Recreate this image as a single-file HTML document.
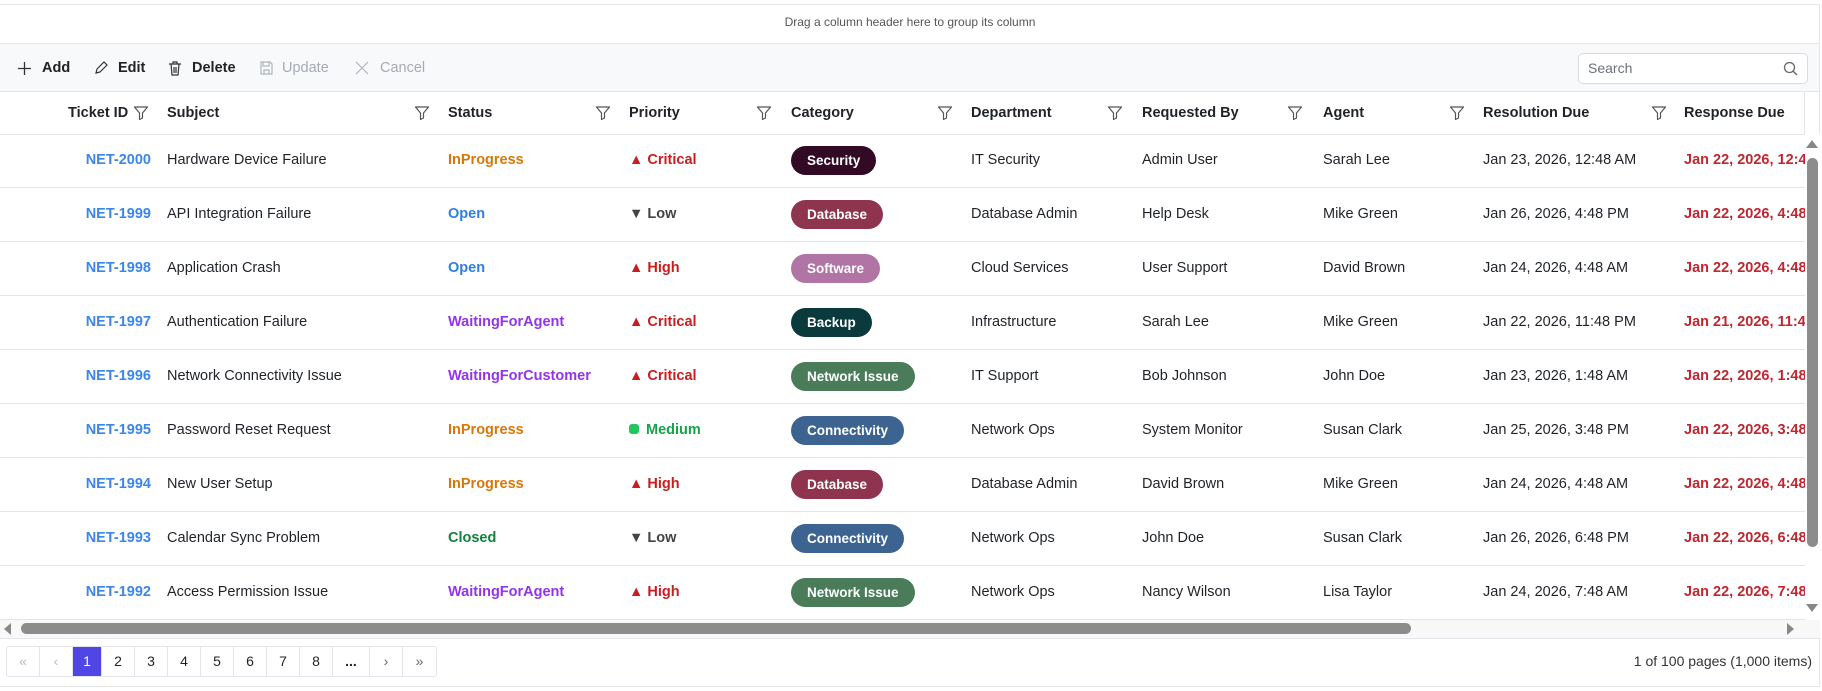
<!DOCTYPE html>
<html><head><meta charset="utf-8"><style>
*{box-sizing:border-box;margin:0;padding:0}
body{width:1822px;height:691px;background:#fff;font-family:"Liberation Sans",sans-serif;color:#1f2329;position:relative;overflow:hidden;font-size:14px}
.abs{position:absolute}
.hl{position:absolute;left:0;width:1820px;height:1px;background:#e3e5ea}
.tb{position:absolute;top:58px;height:20px;line-height:20px;font-size:14.5px;font-weight:bold;color:#222}
.tb.dis{color:#a7abb2;font-weight:normal}
.hd{position:absolute;top:104px;font-weight:bold;font-size:14.5px;line-height:18px}
.flt{position:absolute;top:105px}
.row{position:absolute;left:0;width:1805px;height:54px;border-bottom:1px solid #e3e5ea}
.c{position:absolute;top:0;line-height:53px;white-space:nowrap;font-size:14.5px}
.id{color:#3b86e8;font-weight:bold;text-align:right;width:151px;left:0}
.b{font-weight:bold}
.badge{position:absolute;left:791px;top:12px;height:29px;line-height:29px;border-radius:15px;color:#fff;font-weight:bold;font-size:13.5px;padding:0 16px}
.pg{position:absolute;top:646px;height:31px;border:1px solid #e3e5ea;border-radius:3px;display:flex;left:6px}
.pg div{width:33px;border-right:1px solid #e3e5ea;text-align:center;line-height:29px;font-size:14px}
.pg div:last-child{border-right:none}
</style></head><body>
<div class="hl" style="top:4px"></div>
<div class="abs" style="top:15px;left:0;width:1820px;text-align:center;font-size:12px;color:#555">Drag a column header here to group its column</div>
<div class="abs" style="top:43px;left:0;width:1820px;height:49px;background:#f8f9fb;border-top:1px solid #e3e5ea;border-bottom:1px solid #e3e5ea"></div>
<div class="abs" style="right:2px;top:4px;width:1px;height:682px;background:#e3e5ea"></div>
<svg class="abs" style="left:17px;top:61px" width="15" height="15"><path d="M7.5 1v13M1 7.5h13" stroke="#333" stroke-width="1.3"/></svg>
<div class="tb" style="left:42px">Add</div>
<svg class="abs" style="left:93px;top:60px" width="16" height="16"><path d="M3 13l1-4 7-7 3 3-7 7zM3 13l4-1" fill="none" stroke="#333" stroke-width="1.2"/></svg>
<div class="tb" style="left:118px">Edit</div>
<svg class="abs" style="left:168px;top:60px" width="14" height="16"><path d="M1 4h12M5 4V2h4v2M3 4l1 11h6l1-11M6 7v6M8 7v6" fill="none" stroke="#333" stroke-width="1.2"/></svg>
<div class="tb" style="left:192px">Delete</div>
<svg class="abs" style="left:259px;top:60px" width="15" height="16"><path d="M2 2h9l2 2v10H2zM4 2v4h6V2M5 14v-4h5v4" fill="none" stroke="#b0b4ba" stroke-width="1.2"/></svg>
<div class="tb dis" style="left:282px">Update</div>
<svg class="abs" style="left:355px;top:61px" width="14" height="14"><path d="M1 1l12 12M13 1L1 13" stroke="#b0b4ba" stroke-width="1.2"/></svg>
<div class="tb dis" style="left:380px">Cancel</div>
<div class="abs" style="left:1578px;top:53px;width:230px;height:31px;border:1px solid #d8dbe0;border-radius:5px;background:#fff;font-size:14px;color:#6b7078;line-height:29px;padding-left:9px">Search</div>
<svg class="abs" style="left:1783px;top:61px" width="15" height="15"><circle cx="6.5" cy="6.5" r="5" fill="none" stroke="#666" stroke-width="1.3"/><path d="M10 10l4 4" stroke="#666" stroke-width="1.3"/></svg>
<div class="hl" style="top:134px"></div>
<div class="hd" style="left:68px">Ticket ID</div>
<div class="hd" style="left:167px">Subject</div>
<div class="hd" style="left:448px">Status</div>
<div class="hd" style="left:629px">Priority</div>
<div class="hd" style="left:791px">Category</div>
<div class="hd" style="left:971px">Department</div>
<div class="hd" style="left:1142px">Requested By</div>
<div class="hd" style="left:1323px">Agent</div>
<div class="hd" style="left:1483px">Resolution Due</div>
<div class="hd" style="left:1684px">Response Due</div>
<div class="abs" style="left:1804px;top:92px;width:1px;height:42px;background:#e3e5ea"></div>
<svg width="0" height="0" style="position:absolute"><defs><symbol id="f" viewBox="0 0 16 16"><path d="M1.5 2h13l-5 6v5l-3 1.5V8z" fill="none" stroke="#555" stroke-width="1.2" stroke-linejoin="round"/></symbol></defs></svg>
<svg class="flt" style="left:133px" width="16" height="16"><use href="#f"/></svg>
<svg class="flt" style="left:414px" width="16" height="16"><use href="#f"/></svg>
<svg class="flt" style="left:595px" width="16" height="16"><use href="#f"/></svg>
<svg class="flt" style="left:756px" width="16" height="16"><use href="#f"/></svg>
<svg class="flt" style="left:937px" width="16" height="16"><use href="#f"/></svg>
<svg class="flt" style="left:1107px" width="16" height="16"><use href="#f"/></svg>
<svg class="flt" style="left:1287px" width="16" height="16"><use href="#f"/></svg>
<svg class="flt" style="left:1449px" width="16" height="16"><use href="#f"/></svg>
<svg class="flt" style="left:1651px" width="16" height="16"><use href="#f"/></svg>

<div class="abs" style="left:0;top:134px;width:1805px;height:489px;overflow:hidden">
<div class="row" style="top:0"><div class="c id">NET-2000</div><div class="c" style="left:167px">Hardware Device Failure</div><div class="c b" style="left:448px;color:#d97706">InProgress</div><div class="c b" style="left:629px;color:#c81e1e">▲ Critical</div><div class="badge" style="background:#330a25">Security</div><div class="c" style="left:971px">IT Security</div><div class="c" style="left:1142px">Admin User</div><div class="c" style="left:1323px">Sarah Lee</div><div class="c" style="left:1483px">Jan 23, 2026, 12:48 AM</div><div class="c b" style="left:1684px;color:#c0262d">Jan 22, 2026, 12:48 AM</div></div>
<div class="row" style="top:54px"><div class="c id">NET-1999</div><div class="c" style="left:167px">API Integration Failure</div><div class="c b" style="left:448px;color:#2f7fe0">Open</div><div class="c b" style="left:629px;color:#444">▼ Low</div><div class="badge" style="background:#8e344f">Database</div><div class="c" style="left:971px">Database Admin</div><div class="c" style="left:1142px">Help Desk</div><div class="c" style="left:1323px">Mike Green</div><div class="c" style="left:1483px">Jan 26, 2026, 4:48 PM</div><div class="c b" style="left:1684px;color:#c0262d">Jan 22, 2026, 4:48 PM</div></div>
<div class="row" style="top:108px"><div class="c id">NET-1998</div><div class="c" style="left:167px">Application Crash</div><div class="c b" style="left:448px;color:#2f7fe0">Open</div><div class="c b" style="left:629px;color:#c81e1e">▲ High</div><div class="badge" style="background:#b074a5">Software</div><div class="c" style="left:971px">Cloud Services</div><div class="c" style="left:1142px">User Support</div><div class="c" style="left:1323px">David Brown</div><div class="c" style="left:1483px">Jan 24, 2026, 4:48 AM</div><div class="c b" style="left:1684px;color:#c0262d">Jan 22, 2026, 4:48 AM</div></div>
<div class="row" style="top:162px"><div class="c id">NET-1997</div><div class="c" style="left:167px">Authentication Failure</div><div class="c b" style="left:448px;color:#9333ea">WaitingForAgent</div><div class="c b" style="left:629px;color:#c81e1e">▲ Critical</div><div class="badge" style="background:#0b3a3c">Backup</div><div class="c" style="left:971px">Infrastructure</div><div class="c" style="left:1142px">Sarah Lee</div><div class="c" style="left:1323px">Mike Green</div><div class="c" style="left:1483px">Jan 22, 2026, 11:48 PM</div><div class="c b" style="left:1684px;color:#c0262d">Jan 21, 2026, 11:48 PM</div></div>
<div class="row" style="top:216px"><div class="c id">NET-1996</div><div class="c" style="left:167px">Network Connectivity Issue</div><div class="c b" style="left:448px;color:#9333ea">WaitingForCustomer</div><div class="c b" style="left:629px;color:#c81e1e">▲ Critical</div><div class="badge" style="background:#4a7c59">Network Issue</div><div class="c" style="left:971px">IT Support</div><div class="c" style="left:1142px">Bob Johnson</div><div class="c" style="left:1323px">John Doe</div><div class="c" style="left:1483px">Jan 23, 2026, 1:48 AM</div><div class="c b" style="left:1684px;color:#c0262d">Jan 22, 2026, 1:48 AM</div></div>
<div class="row" style="top:270px"><div class="c id">NET-1995</div><div class="c" style="left:167px">Password Reset Request</div><div class="c b" style="left:448px;color:#d97706">InProgress</div><div class="c b" style="left:629px;color:#16a34a"><span style="display:inline-block;width:10px;height:10px;border-radius:3px;background:#22c55e;margin-right:7px"></span>Medium</div><div class="badge" style="background:#3d6491">Connectivity</div><div class="c" style="left:971px">Network Ops</div><div class="c" style="left:1142px">System Monitor</div><div class="c" style="left:1323px">Susan Clark</div><div class="c" style="left:1483px">Jan 25, 2026, 3:48 PM</div><div class="c b" style="left:1684px;color:#c0262d">Jan 22, 2026, 3:48 PM</div></div>
<div class="row" style="top:324px"><div class="c id">NET-1994</div><div class="c" style="left:167px">New User Setup</div><div class="c b" style="left:448px;color:#d97706">InProgress</div><div class="c b" style="left:629px;color:#c81e1e">▲ High</div><div class="badge" style="background:#8e344f">Database</div><div class="c" style="left:971px">Database Admin</div><div class="c" style="left:1142px">David Brown</div><div class="c" style="left:1323px">Mike Green</div><div class="c" style="left:1483px">Jan 24, 2026, 4:48 AM</div><div class="c b" style="left:1684px;color:#c0262d">Jan 22, 2026, 4:48 AM</div></div>
<div class="row" style="top:378px"><div class="c id">NET-1993</div><div class="c" style="left:167px">Calendar Sync Problem</div><div class="c b" style="left:448px;color:#15803d">Closed</div><div class="c b" style="left:629px;color:#444">▼ Low</div><div class="badge" style="background:#3d6491">Connectivity</div><div class="c" style="left:971px">Network Ops</div><div class="c" style="left:1142px">John Doe</div><div class="c" style="left:1323px">Susan Clark</div><div class="c" style="left:1483px">Jan 26, 2026, 6:48 PM</div><div class="c b" style="left:1684px;color:#c0262d">Jan 22, 2026, 6:48 PM</div></div>
<div class="row" style="top:432px"><div class="c id">NET-1992</div><div class="c" style="left:167px">Access Permission Issue</div><div class="c b" style="left:448px;color:#9333ea">WaitingForAgent</div><div class="c b" style="left:629px;color:#c81e1e">▲ High</div><div class="badge" style="background:#4a7c59">Network Issue</div><div class="c" style="left:971px">Network Ops</div><div class="c" style="left:1142px">Nancy Wilson</div><div class="c" style="left:1323px">Lisa Taylor</div><div class="c" style="left:1483px">Jan 24, 2026, 7:48 AM</div><div class="c b" style="left:1684px;color:#c0262d">Jan 22, 2026, 7:48 AM</div></div>
</div>
<div class="abs" style="left:1805px;top:134px;width:15px;height:488px;background:#fff"></div>
<div class="abs" style="left:1806px;top:140px;width:0;height:0;border-left:6px solid transparent;border-right:6px solid transparent;border-bottom:8px solid #888"></div>
<div class="abs" style="left:1807px;top:158px;width:11px;height:389px;border-radius:6px;background:#8c8c8c"></div>
<div class="abs" style="left:1806px;top:604px;width:0;height:0;border-left:6px solid transparent;border-right:6px solid transparent;border-top:8px solid #888"></div>
<div class="abs" style="left:0;top:620px;width:1820px;height:18px;background:#f8f8f8"></div>
<div class="abs" style="left:4px;top:623px;width:0;height:0;border-top:6px solid transparent;border-bottom:6px solid transparent;border-right:7px solid #888"></div>
<div class="abs" style="left:21px;top:623px;width:1390px;height:11px;border-radius:6px;background:#8c8c8c"></div>
<div class="abs" style="left:1787px;top:623px;width:0;height:0;border-top:6px solid transparent;border-bottom:6px solid transparent;border-left:7px solid #888"></div>
<div class="hl" style="top:638px"></div>
<div class="pg"><div style="color:#bbb">«</div><div style="color:#bbb">‹</div><div style="background:#4f46e5;color:#fff;width:29px">1</div><div>2</div><div>3</div><div>4</div><div>5</div><div>6</div><div>7</div><div>8</div><div style="width:37px;font-weight:bold">...</div><div style="color:#666">›</div><div style="color:#666">»</div></div>
<div class="abs" style="right:10px;top:653px;font-size:14px;color:#333">1 of 100 pages (1,000 items)</div>
<div class="hl" style="top:686px"></div>
</body></html>
